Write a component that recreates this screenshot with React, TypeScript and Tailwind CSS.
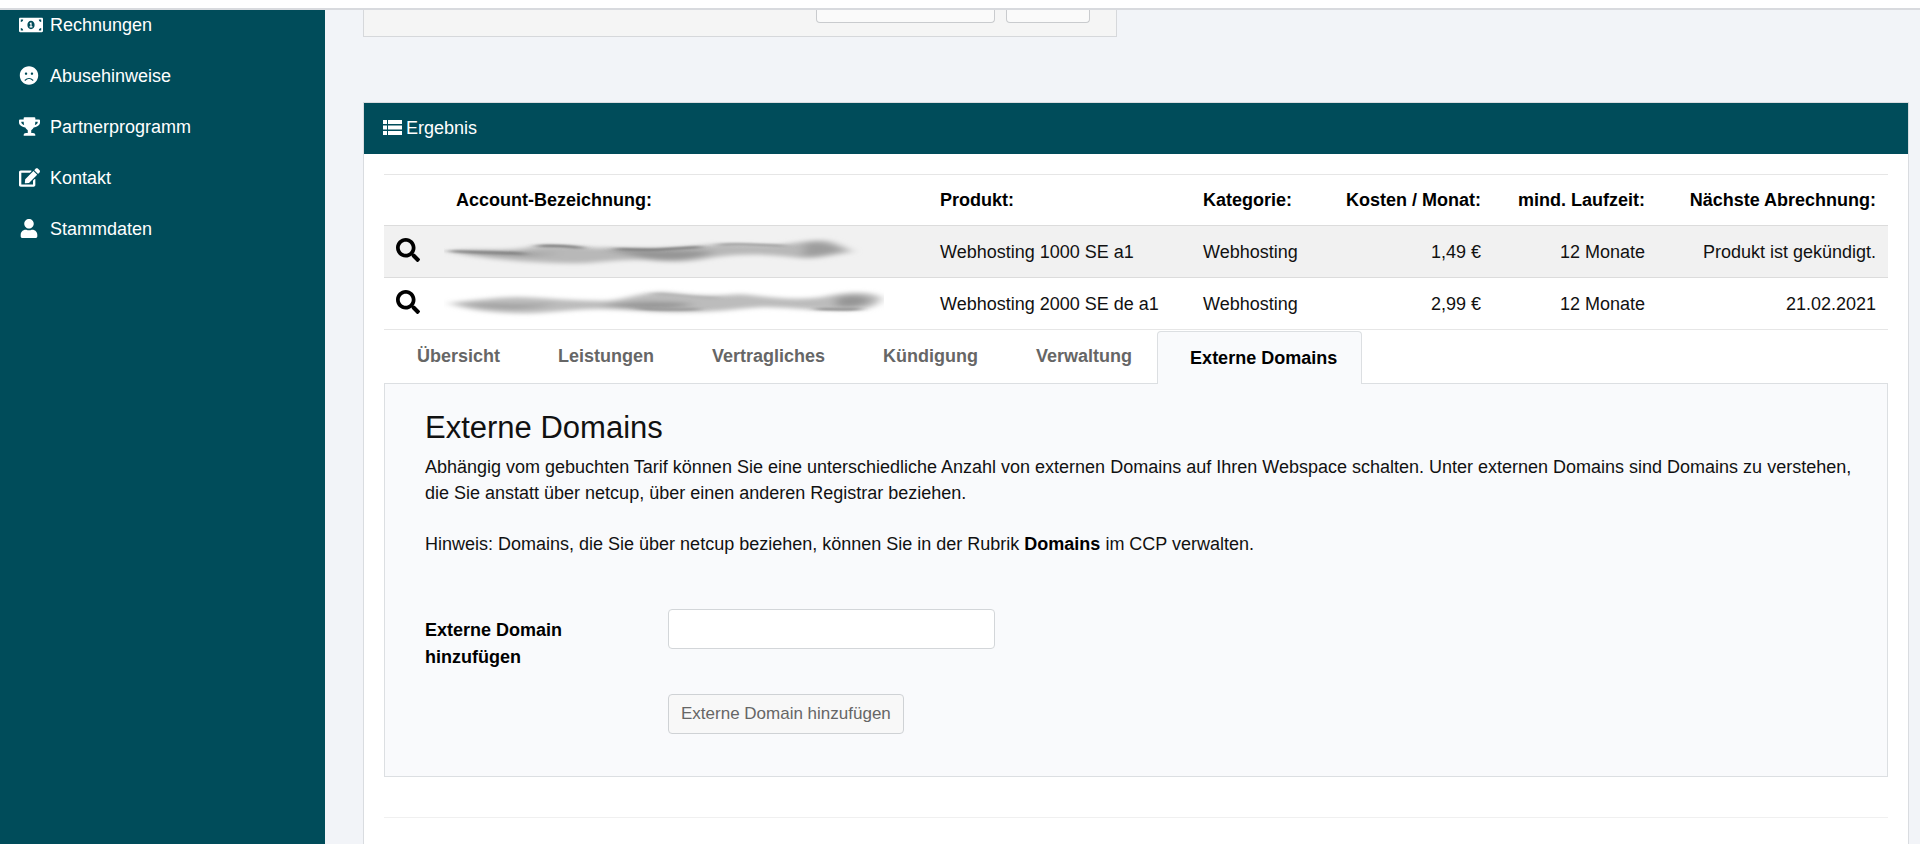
import React, { useState } from 'react';
import { FaEdit, FaFrown, FaMoneyBillAlt, FaSearch, FaTrophy, FaUser } from 'react-icons/fa';

const navItems = [
  { label: 'Rechnungen', icon: FaMoneyBillAlt, size: 'h-5 w-6' },
  { label: 'Abusehinweise', icon: FaFrown, size: 'h-[19px] w-5' },
  { label: 'Partnerprogramm', icon: FaTrophy, size: 'h-[19px] w-[21px]' },
  { label: 'Kontakt', icon: FaEdit, size: 'h-[19px] w-[21px]' },
  { label: 'Stammdaten', icon: FaUser, size: 'h-[19px] w-5' },
];

const tabs = ['Übersicht', 'Leistungen', 'Vertragliches', 'Kündigung', 'Verwaltung', 'Externe Domains'];

const products = [
  { name: 'Webhosting 1000 SE a1', category: 'Webhosting', cost: '1,49 €', term: '12 Monate', next: 'Produkt ist gekündigt.' },
  { name: 'Webhosting 2000 SE de a1', category: 'Webhosting', cost: '2,99 €', term: '12 Monate', next: '21.02.2021' },
];

const ListIcon = () => (
  <svg width="19" height="15" viewBox="0 0 19 15" fill="currentColor" aria-hidden="true">
    <path d="M0 0h4v4H0zM5 0h14v4H5zM0 5.5h4v4H0zM5 5.5h14v4H5zM0 11h4v4H0zM5 11h14v4H5z" />
  </svg>
);

// Smeared account names
const SmudgeOne = () => (
  <svg width="440" height="36" viewBox="0 0 440 36" aria-hidden="true">
    <defs>
      <filter id="smudge-a" x="-5%" y="-60%" width="110%" height="220%">
        <feGaussianBlur stdDeviation="5 2" />
      </filter>
      <filter id="smudge-b" x="-5%" y="-200%" width="110%" height="500%">
        <feGaussianBlur stdDeviation="5 1" />
      </filter>
    </defs>
    <g transform="translate(4 0) scale(1.02 1)">
      <g filter="url(#smudge-a)">
        <path d="M0 17 C30 15 60 18 82 13 C110 9 130 15 155 14 C190 15 215 15 245 12 C275 8 300 12 325 11 C345 9 360 4 374 7 C386 11 394 16 396 18 C380 20 362 26 345 24 C315 20 290 19 262 23 C240 28 220 29 195 26 C165 24 140 31 110 29 C80 28 55 26 40 24 C25 22 12 20 0 17 Z" fill="#b8b8b8" />
        <path d="M150 14 C190 17 225 15 262 18 C240 26 215 28 192 24 C176 20 160 17 150 14 Z" fill="#969696" />
        <path d="M350 10 C364 6 380 12 386 16 C374 20 362 22 348 22 Z" fill="#9d9d9d" />
        <path d="M8 17 C40 17 70 20 110 19 C80 24 40 22 8 17 Z" fill="#9a9a9a" />
      </g>
      <g filter="url(#smudge-b)" fill="none" strokeWidth="2">
        <path d="M2 17 C30 19 55 18 75 20" stroke="#747474" />
        <path d="M88 12 C105 11 118 12 132 14" stroke="#686868" />
        <path d="M165 15 C200 17 220 15 248 13" stroke="#6c6c6c" />
        <path d="M265 11 C285 9 300 11 330 12" stroke="#969696" />
      </g>
    </g>
  </svg>
);

const SmudgeTwo = () => (
  <svg width="440" height="36" viewBox="0 0 440 36" aria-hidden="true">
    <g transform="scale(1.02 1)">
      <g filter="url(#smudge-a)">
        <path d="M4 17 C35 14 52 11 75 11 C100 12 130 15 160 15 C180 13 195 6 215 6 C240 9 260 11 290 8 C320 11 345 15 372 11 C390 6 416 4 428 11 C430 18 416 24 400 24 C375 25 345 22 315 21 C290 22 270 26 240 26 C210 27 180 23 155 23 C125 22 95 29 65 27 C40 26 22 23 4 17 Z" fill="#bcbcbc" />
        <path d="M155 19 C190 15 215 14 245 18 C225 25 185 24 155 19 Z" fill="#989898" />
        <path d="M385 12 C400 8 416 10 418 15 C408 21 398 22 384 20 Z" fill="#969696" />
        <path d="M18 18 C50 16 80 20 110 17 C88 24 50 25 18 18 Z" fill="#a0a0a0" />
      </g>
      <g filter="url(#smudge-b)" fill="none" strokeWidth="2">
        <path d="M365 23 C382 23 392 24 408 23" stroke="#7e7e7e" />
        <path d="M205 8 C225 8 240 12 270 12" stroke="#b0b0b0" />
        <path d="M190 22 C210 24 225 24 250 23" stroke="#909090" />
      </g>
    </g>
  </svg>
);

const Sidebar: React.FC = () => (
  <nav className="w-[325px] shrink-0 bg-[#004c5a] text-white">
    <ul className="-mt-[11px]">
      {navItems.map(({ label, icon: Icon, size }) => (
        <li key={label}>
          <a href="#" className="flex h-[51px] items-center pl-[19px]">
            <span className="flex w-[31px] shrink-0">
              <Icon className={size} />
            </span>
            {label}
          </a>
        </li>
      ))}
    </ul>
  </nav>
);

const ProductTable: React.FC = () => (
  <table className="w-full table-fixed border-b border-[#e6e6e6]">
    <colgroup>
      <col className="w-[60px]" />
      <col />
      <col className="w-[263px]" />
      <col className="w-[132px]" />
      <col className="w-[170px]" />
      <col className="w-[164px]" />
      <col className="w-[231px]" />
    </colgroup>
    <thead>
      <tr className="h-[51px] border-t border-[#e6e6e6] text-left text-black">
        <td />
        <th className="px-3">Account-Bezeichnung:</th>
        <th className="px-3">Produkt:</th>
        <th className="px-3">Kategorie:</th>
        <th className="px-3 text-right">Kosten / Monat:</th>
        <th className="px-3 text-right">mind. Laufzeit:</th>
        <th className="px-3 text-right">Nächste Abrechnung:</th>
      </tr>
    </thead>
    <tbody>
      {products.map((p, i) => (
        <tr key={p.name} className="h-[52px] border-t border-[#dcdcdc] odd:bg-[#f1f1f1]">
          <td className="pb-1 pl-3">
            <button type="button" aria-label="Details" className="flex text-black">
              <FaSearch className="h-6 w-6" />
            </button>
          </td>
          <td>{i === 0 ? <SmudgeOne /> : <SmudgeTwo />}</td>
          <td className="px-3">{p.name}</td>
          <td className="px-3">{p.category}</td>
          <td className="px-3 text-right">{p.cost}</td>
          <td className="px-3 text-right">{p.term}</td>
          <td className="px-3 text-right">{p.next}</td>
        </tr>
      ))}
    </tbody>
  </table>
);

const App: React.FC = () => {
  const [activeTab, setActiveTab] = useState('Externe Domains');
  const [domain, setDomain] = useState('');

  return (
    <div className="flex h-screen flex-col overflow-hidden bg-[#f2f4f8] font-['Liberation_Sans',Arial,sans-serif] text-lg text-[#111]">
      <header className="h-2.5 shrink-0 border-b-2 border-[#d8dade] bg-white" />
      <div className="flex min-h-0 flex-1">
        <Sidebar />
        <main className="flex min-w-0 flex-1 flex-col pr-[11px] pl-[38px]">
          <div className="flex h-[27px] w-[754px] shrink-0 items-start justify-end gap-[11px] border border-t-0 border-[#d6d8db] bg-[#f5f5f5] pr-[26px]">
            <button type="button" aria-label="Suchen" className="h-[13px] w-[179px] rounded-b border border-t-0 border-[#c9cbce] bg-[#fafafa]" />
            <button type="button" aria-label="Reset" className="h-[13px] w-[84px] rounded-b border border-t-0 border-[#c9cbce] bg-[#fafafa]" />
          </div>

          <section className="mt-[65px] flex-1 border border-b-0 border-[#d9dce0] bg-white">
            <h2 className="flex h-[51px] items-center gap-1 bg-[#004c5a] pb-0.5 pl-[19px] text-white">
              <ListIcon /> Ergebnis
            </h2>
            <div className="px-5 pt-5">
              <ProductTable />

              <div role="tablist" className="flex h-[54px] items-end border-b border-[#dcdfe2] font-bold">
                {tabs.map((tab) => (
                  <button
                    key={tab}
                    type="button"
                    role="tab"
                    aria-selected={tab === activeTab}
                    onClick={() => setActiveTab(tab)}
                    className={
                      tab === activeTab
                        ? '-mb-px h-[53px] rounded-t border border-b-0 border-[#dcdfe2] bg-[#f9fafc] pr-6 pl-8 text-black'
                        : 'h-[53px] border border-transparent pr-6 pb-0.5 pl-8 text-[#666]'
                    }
                  >
                    {tab}
                  </button>
                ))}
              </div>

              <div role="tabpanel" className="border border-t-0 border-[#dcdfe2] bg-[#f9fafc] px-10 pt-6 pb-[42px]">
                <h3 className="text-[31px] leading-10">Externe Domains</h3>
                <p className="-mr-4 mt-1.5 leading-[26px]">
                  Abhängig vom gebuchten Tarif können Sie eine unterschiedliche Anzahl von externen Domains auf Ihren Webspace schalten. Unter externen Domains sind Domains zu verstehen, die Sie anstatt über netcup, über einen anderen Registrar beziehen.
                </p>
                <p className="mt-[25px] leading-[26px]">
                  Hinweis: Domains, die Sie über netcup beziehen, können Sie in der Rubrik <b className="text-black">Domains</b> im CCP verwalten.
                </p>
                <form className="mt-[52px]" onSubmit={(e) => e.preventDefault()}>
                  <div className="flex items-start">
                    <label htmlFor="domain" className="w-[243px] shrink-0 pt-2 pr-20 leading-[27px] font-bold text-black">
                      Externe Domain hinzufügen
                    </label>
                    <input
                      id="domain"
                      type="text"
                      value={domain}
                      onChange={(e) => setDomain(e.target.value)}
                      className="h-10 w-[327px] rounded border border-[#d3d6d9] bg-white px-3"
                    />
                  </div>
                  <button type="submit" className="mt-[23px] ml-[243px] h-10 rounded border border-[#cfd2d5] bg-[#f8f8f8] px-3 text-[17px] text-[#666]">
                    Externe Domain hinzufügen
                  </button>
                </form>
              </div>
              <hr className="mt-10 border-[#f0f0f0]" />
            </div>
          </section>
        </main>
      </div>
    </div>
  );
};

export default App;
